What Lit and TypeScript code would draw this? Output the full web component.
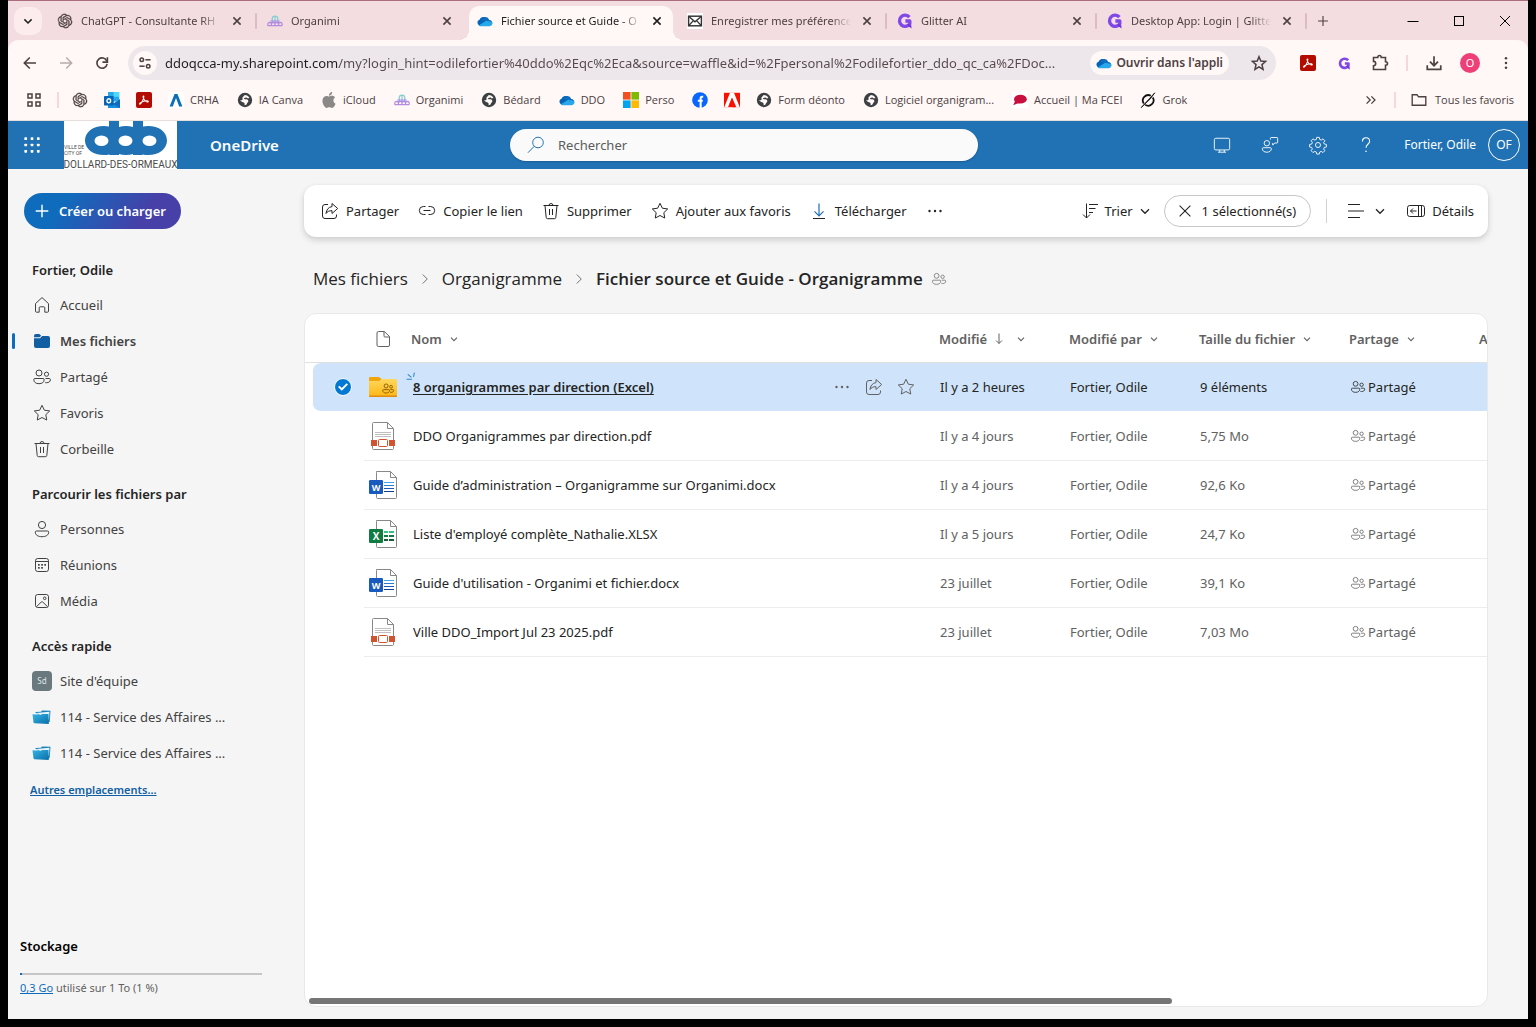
import { LitElement, html, svg, css, nothing, type TemplateResult, type SVGTemplateResult } from "lit";
import { customElement, property, state } from "lit/decorators.js";
import { classMap } from "lit/directives/class-map.js";
import { styleMap } from "lit/directives/style-map.js";

/* ------------------------------------------------------------------ icons */

const people = svg`<circle cx="7" cy="6" r="3"/><circle cx="14.5" cy="7.2" r="2.1"/>
  <path d="M3 11.5h8a1.2 1.2 0 0 1 1.2 1.2c0 2.4-2 4-5.2 4s-5.200-1.600-5.200-4A1.200 1.200 0 0 1 3 11.500z"/>
  <path d="M13.500 11.500h3.700a1.200 1.200 0 0 1 1.200 1.200c0 2-1.600 3-3.900 3-.6 0-1 0-1.500-.2"/>`;
const star = svg`<path d="M10 2.300l2.350 4.900 5.350.750-3.900 3.750.950 5.350L10 14.500l-4.750 2.550.950-5.350L2.300 7.950l5.350-.750z"/>`;
const cloud = svg`<path d="M2 13.500a3.600 3.600 0 0 1-.4-7A5.300 5.300 0 0 1 10.500 4.600l3.300 2.700z" transform="translate(1.500 2)" fill="#0364b8" stroke="none"/>
  <path d="M5.500 8.200A5.200 5.200 0 0 1 15.300 8.600 4.200 4.200 0 0 1 19 13l-3 1.500z" fill="#0f6cbd" stroke="none"/>
  <path d="M4 16.500h11.800A3.700 3.700 0 0 0 19 11.200L11.500 9.600 2 15.600A4 4 0 0 0 4 16.500z" fill="#28a8ea" stroke="none"/>`;
const openai = svg`<path transform="translate(1 1) scale(.75)" fill="currentColor" stroke="currentColor" stroke-width=".5" d="M22.2819 9.8211a5.9847 5.9847 0 0 0-.5157-4.9108 6.0462 6.0462 0 0 0-6.5098-2.9A6.0651 6.0651 0 0 0 4.9807 4.1818a5.9847 5.9847 0 0 0-3.9977 2.9 6.0462 6.0462 0 0 0 .7427 7.0966 5.98 5.98 0 0 0 .511 4.9107 6.051 6.051 0 0 0 6.5146 2.9001A5.9847 5.9847 0 0 0 13.2599 24a6.0557 6.0557 0 0 0 5.7718-4.2058 5.9894 5.9894 0 0 0 3.9977-2.9001 6.0557 6.0557 0 0 0-.7475-7.0729zm-9.022 12.6081a4.4755 4.4755 0 0 1-2.8764-1.0408l.1419-.0804 4.7783-2.7582a.7948.7948 0 0 0 .3927-.6813v-6.7369l2.02 1.1686a.071.071 0 0 1 .038.052v5.5826a4.504 4.504 0 0 1-4.4945 4.4944zm-9.6607-4.1254a4.4708 4.4708 0 0 1-.5346-3.0137l.142.0852 4.783 2.7582a.7712.7712 0 0 0 .7806 0l5.8428-3.3685v2.3324a.0804.0804 0 0 1-.0332.0615L9.74 19.9502a4.4992 4.4992 0 0 1-6.1408-1.6464zM2.3408 7.8956a4.485 4.485 0 0 1 2.3655-1.9728V11.6a.7664.7664 0 0 0 .3879.6765l5.8144 3.3543-2.0201 1.1685a.0757.0757 0 0 1-.071 0l-4.8303-2.7865A4.504 4.504 0 0 1 2.3408 7.872zm16.5963 3.8558L13.1038 8.364 15.1192 7.2a.0757.0757 0 0 1 .071 0l4.8303 2.7913a4.4944 4.4944 0 0 1-.6765 8.1042v-5.6772a.79.79 0 0 0-.407-.667zm2.0107-3.0231l-.142-.0852-4.7735-2.7818a.7759.7759 0 0 0-.7854 0L9.409 9.2297V6.8974a.0662.0662 0 0 1 .0284-.0615l4.8303-2.7866a4.4992 4.4992 0 0 1 6.6802 4.66zM8.3065 12.863l-2.02-1.1638a.0804.0804 0 0 1-.038-.0567V6.0742a4.4992 4.4992 0 0 1 7.3757-3.4537l-.142.0805L8.704 5.459a.7948.7948 0 0 0-.3927.6813zm1.0976-2.3654l2.602-1.4998 2.6069 1.4998v2.9994l-2.5974 1.4997-2.6067-1.4997Z"/>`;
const sheet = svg`<path d="M8.500 1.500h14l6 6v20a1 1 0 0 1-1 1h-18a1 1 0 0 1-1-1v-25a1 1 0 0 1 1-1z" fill="#fff" stroke="#8a8886"/>
  <path d="M22.500 1.500v6h6" fill="none" stroke="#8a8886"/>`;

const icons: Record<string, SVGTemplateResult> = {
  openai,
  organimi: svg`<g fill="none" stroke-width="1.500"><path d="M6.500 9V7.500a3.500 3.500 0 0 1 7 0V9M10 4v6" stroke="#84cfd0"/><path d="M6.500 13V8.500M10 13V9M13.500 13V8.500M4 10h12" stroke="#9a9ee6"/>
    <path d="M1 16v-2a2 2 0 0 1 4.500 0V16M5.500 16v-2.500a2 2 0 0 1 4.500 0V16M10 13.500a2 2 0 0 1 4.500 0V16M14.500 16v-2a2 2 0 0 1 4.500 0V16M1 15.800h18M3 12h14" stroke="#b58be0"/></g>`,
  cloud,
  mail: svg`<path d="M0 0h20v20H0z" fill="#fff" stroke="none"/><rect x="2" y="4" width="16" height="12" fill="#fff" stroke="#333" stroke-width="1.800"/><path d="M2 4l8 7 8-7M2 16l6-6.500M18 16l-6-6.500" stroke="#333" stroke-width="1.600"/>`,
  glitter: svg`<path d="M15.500 5.200A7 7 0 1 0 16 13.500V10H10.500" stroke="#8048e6" stroke-width="4.200" stroke-linejoin="round"/><path d="M12 13l6 2.500v4l-3-2.500z" fill="#6d32d9" stroke="none"/>`,
  close: svg`<path d="M5.500 5.500l9 9M14.500 5.500l-9 9" stroke-width="2"/>`,
  plus: svg`<path d="M10 3v14M3 10h14" stroke-width="1.600"/>`,
  minimize: svg`<path d="M4.500 10.500h11"/>`,
  maximize: svg`<rect x="5.500" y="5.500" width="9" height="9"/>`,
  windowClose: svg`<path d="M5 5l10 10M15 5L5 15"/>`,
  chevronBold: svg`<path d="M5.500 8l4.500 4.500L14.500 8" stroke-width="1.900"/>`,
  chevron: svg`<path d="M5 7.800l5 5 5-5" stroke-width="1.600"/>`,
  chevronSmall: svg`<path d="M7 8.700l3 3 3-3" stroke-width="1.100"/>`,
  chevronRight: svg`<path d="M7.500 5l5 5-5 5" stroke-width="1.100"/>`,
  back: svg`<path d="M16 10H4.500M9.800 4.500L4.300 10l5.500 5.500" stroke-width="1.600"/>`,
  forward: svg`<path d="M4 10h11.500M10.200 4.500l5.500 5.500-5.500 5.500" stroke-width="1.500"/>`,
  reload: svg`<path d="M15.400 8A5.700 5.700 0 1 0 15.700 11" stroke-width="1.800"/><path d="M16 3.500V9h-5.500" stroke-width="1.800"/>`,
  tune: svg`<g stroke-width="1.900"><circle cx="6" cy="6" r="2.200"/><path d="M10.500 6H17"/><circle cx="14" cy="14" r="2.200"/><path d="M3 14h6.500"/></g>`,
  starBold: svg`<path d="M10 3l2 4.900 5.300.4-4 3.500 1.200 5.200L10 14.200 5.500 17l1.200-5.200-4-3.500L8 7.900z" stroke-width="1.700"/>`,
  pdf: svg`<rect width="20" height="20" rx="2.500" fill="#b30b00" stroke="none"/><path d="M4.800 15.200c1.600-.4 4.700-5.700 5-9.200.1-1.600-1.200-1.400-1 0 .4 3 3.200 6.200 5.400 6.600 1.600.2 1.500-1.300 0-1.500-2.300-.3-5.600.5-8.400 2.200-1.400.9-1.800 2-1 1.900z" stroke="#fff" stroke-width="1.300"/>`,
  puzzle: svg`<path d="M3.500 4.500h4.300c0-1 .5-2 1.700-2s1.700 1 1.700 2h4.300v4.300c1 0 2 .5 2 1.700s-1 1.700-2 1.700v4.300h-12v-3.700c1.200 0 2.200-.7 2.200-2.200s-1-2.200-2.200-2.200z" stroke-width="1.600"/>`,
  download: svg`<path d="M10 2.500v10M5.500 8.500L10 13l4.500-4.500M2.500 12.500v4.500h15v-4.500" stroke-width="1.900"/>`,
  menu: svg`<g fill="currentColor" stroke="none"><circle cx="10" cy="4" r="1.600"/><circle cx="10" cy="10" r="1.600"/><circle cx="10" cy="16" r="1.600"/></g>`,
  apps: svg`<g stroke-width="1.900"><rect x="2.500" y="2.500" width="5" height="5"/><rect x="12.500" y="2.500" width="5" height="5"/><rect x="2.500" y="12.500" width="5" height="5"/><rect x="12.500" y="12.500" width="5" height="5"/></g>`,
  outlook: svg`<rect x="5" y="0" width="14" height="12" fill="#28a8ea" stroke="none"/><rect x="12" y="0" width="7" height="6" fill="#50d9ff" stroke="none"/><path d="M5 9l8 5 7-5v11H5z" fill="#1490df" stroke="none"/><path d="M20 9v11l-9-5z" fill="#0f6cbd" stroke="none"/><rect x="0" y="5" width="12" height="12" rx="1" fill="#0364b8" stroke="none"/><ellipse cx="6" cy="11" rx="2.300" ry="2.500" stroke="#fff" stroke-width="1.700"/>`,
  crha: svg`<path d="M0 0h20v20H0z" fill="#fff" stroke="none"/><path d="M2 18L8.200 2.500h3.600L18 18h-4L10 7.500 6 18z" fill="#0a6fb8" stroke="none"/>`,
  globe: svg`<circle cx="10" cy="10" r="9" fill="#3c4043" stroke="none"/><path d="M9.500 3.700c2.700 0 5 1.300 6 3.800-1.500.9-2.800.3-3.400-.7-1.200-.2-2.300.7-3.400.9.200 1.400 1.600 1.400 2.900 1.500 1.800.2 2.800 1.300 2.500 2.800-.3 1.300-1.400 1.500-1.700 2.500-.4 1.200-1.300 2.300-3 2.200.4-1.500.2-2.600-.9-3.500-1.300-1-3.700-1.200-4.700-3 1.400.2 2.400.3 3-.6.500-1-.4-1.800.2-3 .6-1.200 2-1.500 2.500-2.900z" fill="#fff8f6" stroke="none"/>`,
  apple: svg`<path transform="scale(.8333)" fill="#8b8888" stroke="none" d="M12.152 6.896c-.948 0-2.415-1.078-3.960-1.040-2.040.027-3.910 1.183-4.961 3.014-2.117 3.675-.546 9.103 1.519 12.090 1.013 1.454 2.208 3.090 3.792 3.039 1.520-.065 2.090-.987 3.935-.987 1.831 0 2.350.987 3.960.948 1.637-.026 2.676-1.480 3.676-2.948 1.156-1.688 1.636-3.325 1.662-3.415-.039-.013-3.182-1.221-3.220-4.857-.026-3.040 2.480-4.494 2.597-4.559-1.429-2.090-3.623-2.324-4.390-2.376-2-.156-3.675 1.090-4.610 1.090zM15.530 3.830c.843-1.012 1.400-2.427 1.245-3.830-1.207.052-2.662.805-3.532 1.818-.780.896-1.454 2.338-1.273 3.714 1.338.104 2.715-.688 3.559-1.701"/>`,
  microsoft: svg`<g stroke="none"><path d="M0 0h9.500v9.500H0z" fill="#f25022"/><path d="M10.500 0H20v9.500h-9.500z" fill="#7fba00"/><path d="M0 10.500h9.500V20H0z" fill="#00a4ef"/><path d="M10.500 10.500H20V20h-9.500z" fill="#ffb900"/></g>`,
  facebook: svg`<circle cx="10" cy="10" r="9.800" fill="#0866ff" stroke="none"/><path d="M14 6H12.500C11.300 6 10.800 6.700 10.800 7.900V20M7.300 11h6.200" stroke="#fff" stroke-width="2.600"/>`,
  adobe: svg`<path d="M0 1h20v18H0z" fill="#fa0f00" stroke="none"/><path d="M7.500 1L.300 19H5L10 6.800 15.500 19h4.200L12.500 1z" fill="#fff" stroke="none"/><path d="M10 7.800l3.800 11.200h-3l-1.200-3.800H6.700z" fill="#fa0f00" stroke="none"/>`,
  bubble: svg`<path d="M0 0h20v20H0z" fill="#fff" stroke="none"/><ellipse cx="10.500" cy="9" rx="8" ry="5.500" fill="#c8103e" stroke="none"/><path d="M4 11l-2.500 5.500L9 13.500z" fill="#c8103e" stroke="none"/>`,
  grok: svg`<path d="M13.500 4.700A6.800 6.800 0 0 0 4.700 14.500M6.500 16A6.800 6.800 0 0 0 16 6.800" stroke="#111" stroke-width="2.200"/><path d="M18.500 1L1.500 19.500 13 8.500z" fill="#111" stroke="#111"/>`,
  more: svg`<path d="M4.500 5.500L9 10l-4.500 4.500M10.500 5.500L15 10l-4.500 4.500" stroke-width="1.600"/>`,
  folderLine: svg`<path d="M1.500 3.500h6l2 2.500h9v10.500h-17z" stroke-width="1.700"/>`,
  waffle: svg`<g fill="currentColor" stroke="none">${[3, 10, 17].map((y) => [3, 10, 17].map((x) => svg`<rect x=${x - 1.5} y=${y - 1.5} width="3" height="3" rx=".7"/>`))}</g>`,
  search: svg`<circle cx="12" cy="7.500" r="5.300"/><path d="M8.200 11.300L2 17.700"/>`,
  screen: svg`<rect x="1.500" y="2.500" width="17" height="13" rx="1.700"/><path d="M7.500 15.500v2.500M12.500 15.500v2.500M5.500 18h9"/>`,
  feedback: svg`<circle cx="6.500" cy="8" r="3"/><path d="M2.500 13h8a1 1 0 0 1 1 1c0 2.500-2 4-5 4s-5-1.500-5-4a1 1 0 0 1 1-1z"/><path d="M10.500 4V2.500a.8.800 0 0 1 .8-.8h6.400a.8.800 0 0 1 .8.800V7a.8.800 0 0 1-.8.800h-2.200L13 10V7.800"/>`,
  gear: svg`<circle cx="10" cy="10" r="2.800"/><path d="M8.600 1.500h2.800l.5 2.300 1.700.7 2-1.300 2 2-1.300 2 .7 1.700 2.300.5v2.800l-2.300.5-.7 1.700 1.300 2-2 2-2-1.300-1.700.7-.5 2.300H8.600l-.5-2.300-1.700-.7-2 1.300-2-2 1.300-2-.7-1.700-2.300-.5V9.400l2.300-.5.700-1.700-1.300-2 2-2 2 1.300 1.700-.7z"/>`,
  help: svg`<path d="M6 6.200C6 3.600 7.600 2 10 2s4 1.500 4 3.800c0 3.200-4 3.600-4 7.200" stroke-width="1.200"/><circle cx="10" cy="17" r=".9" fill="currentColor" stroke="none"/>`,
  home: svg`<path d="M3.500 8.600L10 2.600l6.500 6v7.600a1 1 0 0 1-1 1h-2.700v-4.400a1 1 0 0 0-1-1H8.200a1 1 0 0 0-1 1v4.400H4.500a1 1 0 0 1-1-1z"/>`,
  folder: svg`<g fill="#115ea3" stroke="none"><path d="M2 5a2 2 0 0 1 2-2h3.300l1.900 1.700-1.600 1.600H2z"/><path d="M2 7.200h6l2.200-2.200H16a2 2 0 0 1 2 2v8a2 2 0 0 1-2 2H4a2 2 0 0 1-2-2z"/></g>`,
  people,
  star,
  trash: svg`<path d="M2.500 4.500h15M8 4.500a2 2 0 0 1 4 0M4 4.500l1.200 12a1.300 1.300 0 0 0 1.300 1.200h7a1.300 1.300 0 0 0 1.300-1.200L16 4.500M8.500 8v6M11.500 8v6"/>`,
  person: svg`<circle cx="10" cy="6" r="3.600"/><path d="M4.500 12h11a1.200 1.200 0 0 1 1.200 1.200c0 2.800-2.700 4.500-6.700 4.500s-6.700-1.700-6.700-4.500A1.200 1.200 0 0 1 4.500 12z"/>`,
  calendar: svg`<rect x="3.500" y="3.500" width="13" height="13" rx="2.200"/><path d="M3.500 6.500h13"/><g fill="currentColor" stroke="none"><rect x="6" y="9" width="1.700" height="1.700"/><rect x="9.200" y="9" width="1.700" height="1.700"/><rect x="12.300" y="9" width="1.700" height="1.700"/><rect x="6" y="12" width="1.700" height="1.700"/><rect x="9.200" y="12" width="1.700" height="1.700"/></g>`,
  image: svg`<rect x="3.500" y="3.500" width="13" height="13" rx="2.200"/><circle cx="12.700" cy="7.300" r="1.300"/><path d="M4.500 15.700l4.700-4.600a1.100 1.100 0 0 1 1.600 0l4.700 4.600"/>`,
  library: svg`<defs><linearGradient id="lib" x1="0" y1="0" x2="1" y2="1"><stop offset="0" stop-color="#35b4e6"/><stop offset="1" stop-color="#0a6ea8"/></linearGradient></defs><g stroke="none"><path d="M3 5l6-.3 1-1.200 8.500.3-.8 11-2.200 1.200z" fill="#1a83ba"/><path d="M4 6l13.500-1.200-.6 8z" fill="#e9f5fb"/><path d="M.500 7.300l8.500.5 1-.8h6.500l.3 10-14-.8a1.200 1.200 0 0 1-1.300-1z" fill="url(#lib)"/></g>`,
  share: svg`<path d="M8 3.500H5A2.500 2.500 0 0 0 2.500 6v9A2.500 2.500 0 0 0 5 17.500h9a2.500 2.500 0 0 0 2.500-2.500v-1.500"/><path d="M12 2.500l5.700 5-5.700 5V9.700c-3 0-4.700.8-6 2.800.3-3.600 2.500-6.500 6-6.900z"/>`,
  link: svg`<path d="M8.500 5.500H6.300a4 4 0 0 0 0 8h2.200M11.500 5.500h2.200a4 4 0 0 1 0 8h-2.200M6.500 9.500h7"/>`,
  arrowDownLine: svg`<path d="M10 2.500v12M5.500 10.300l4.500 4.500 4.500-4.500" stroke="#1e6fb8" stroke-width="1.200"/><path d="M4 17.500h12"/>`,
  dots: svg`<g fill="currentColor" stroke="none"><circle cx="4.500" cy="10" r="1.200"/><circle cx="10" cy="10" r="1.200"/><circle cx="15.500" cy="10" r="1.200"/></g>`,
  sort: svg`<path d="M5.500 2.500v14.500M2 13.500L5.500 17l3.500-3.500M8 3.500h9M8 7.500h6.500M8 11.500h4"/>`,
  clear: svg`<path d="M4 4l12 12M16 4L4 16" stroke-width="1.200"/>`,
  list: svg`<path d="M2 3.500h12M2 10h16M2 16.500h12" stroke-width="1.200"/>`,
  details: svg`<rect x="1.500" y="4.500" width="17" height="11" rx="2.200"/><path d="M12.500 4.500v11M10.500 10H4.500M7 7.500L4.500 10 7 12.500M15.500 4.500v11"/>`,
  document: svg`<path d="M5.500 2.500h5.800l5.200 5v8.500a1.500 1.500 0 0 1-1.500 1.500H5.500A1.500 1.500 0 0 1 4 16V4a1.500 1.500 0 0 1 1.500-1.500zM11 2.500V7a1 1 0 0 0 1 1h4.500"/>`,
  arrowDown: svg`<path d="M10 4.500v10M7 11.500l3 3 3-3"/>`,
  glimmer: svg`<path d="M1 12h9M3 4l6 5M14 1l-1.500 7" stroke="#2b88d8" stroke-width="1.800"/>`,
};

const fileIcons: Record<string, SVGTemplateResult> = {
  folder: svg`<defs><linearGradient id="fold" x1="0" y1="0" x2="0" y2="1"><stop offset="0" stop-color="#ffd75e"/><stop offset="1" stop-color="#fdb713"/></linearGradient></defs>
    <path d="M1 6a1 1 0 0 1 1-1h8.500a2 2 0 0 1 1.400.6L13.500 7 12 9H1z" fill="#f2a60c"/><path d="M1 9h10.500l2-2H28a1 1 0 0 1 1 1v16a1 1 0 0 1-1 1H2a1 1 0 0 1-1-1z" fill="url(#fold)"/><path d="M1 23.500h28v.5a1 1 0 0 1-1 1H2a1 1 0 0 1-1-1z" fill="#e08c10"/>
    <g transform="translate(13.500 10) scale(.66)" fill="none" stroke="#8a5a00" stroke-width="1.400">${people}</g>`,
  pdf: svg`<path d="M5.500 1.500h14l6 6v20a1 1 0 0 1-1 1h-19a1 1 0 0 1-1-1v-25a1 1 0 0 1 1-1z" fill="#fff" stroke="#8a8886"/><path d="M19.500 1.500v6h6" fill="none" stroke="#8a8886"/><path d="M7 11.500h16M7 13.500h16M7 15.500h16" stroke="#c0bfbe"/><path d="M3 19h24v6H3z" fill="#d35230"/><rect x="9" y="17" width="12" height="9" rx="1.500" fill="#fff"/><rect x="10.500" y="18.500" width="9" height="7" rx="1" fill="#fff" stroke="#d35230"/>`,
  word: svg`${sheet}<path d="M16 12.500h10" stroke="#41a5ee"/><path d="M16 15.500h10" stroke="#2b7cd3"/><path d="M16 18.500h10" stroke="#185abd"/><path d="M16 21.500h10" stroke="#103f91"/><rect x="1" y="10" width="14" height="14" rx="1.200" fill="#185abd"/><text x="8" y="20.500" text-anchor="middle" font-size="9" font-weight="700" fill="#fff">W</text>`,
  excel: svg`${sheet}<g stroke-width="2"><path d="M16 13h4M21 13h5" stroke="#33c481"/><path d="M16 17h4M21 17h5" stroke="#107c41"/><path d="M16 21h4M21 21h5" stroke="#185c37"/></g><rect x="1" y="10" width="14" height="14" rx="1.200" fill="#107c41"/><text x="8" y="20.500" text-anchor="middle" font-size="10" font-weight="700" fill="#fff">X</text>`,
};

@customElement("ui-icon")
class UiIcon extends LitElement {
  static styles = css`
    :host { display: inline-flex; flex: none; }
    svg { display: block; fill: none; stroke: currentColor; stroke-width: 1; overflow: visible; }
  `;
  @property() name = "";
  @property({ type: Number }) size = 20;
  render() {
    return html`<svg width=${this.size} height=${this.size} viewBox="0 0 20 20" aria-hidden="true">${icons[this.name]}</svg>`;
  }
}

@customElement("file-icon")
class FileIcon extends LitElement {
  static styles = css`
    :host { display: inline-flex; flex: none; }
    svg { display: block; font-family: "Open Sans", sans-serif; }
  `;
  @property() kind = "";
  render() {
    return html`<svg width="30" height="30" viewBox="0 0 30 30" aria-hidden="true">${fileIcons[this.kind]}</svg>`;
  }
}

const icon = (name: string, size = 20): TemplateResult => html`<ui-icon .name=${name} .size=${size}></ui-icon>`;

const base = css`
  * { box-sizing: border-box; }
  button, input { font: inherit; color: inherit; margin: 0; padding: 0; border: 0; background: none; }
  button { cursor: pointer; display: inline-flex; align-items: center; justify-content: center; white-space: nowrap; }
  a { color: inherit; text-decoration: none; }
  ul, ol { list-style: none; margin: 0; padding: 0; }
  h2 { margin: 0; font-size: 13px; font-weight: 600; }
`;

/* --------------------------------------------------------- browser window */

const tabs = [
  { icon: "openai", title: "ChatGPT - Consultante RH" },
  { icon: "organimi", title: "Organimi" },
  { icon: "cloud", title: "Fichier source et Guide - O" },
  { icon: "mail", title: "Enregistrer mes préférence" },
  { icon: "glitter", title: "Glitter AI" },
  { icon: "glitter", title: "Desktop App: Login | Glitte" },
];

const bookmarks = [
  { icon: "openai", label: "" },
  { icon: "outlook", label: "" },
  { icon: "pdf", label: "" },
  { icon: "crha", label: "CRHA" },
  { icon: "globe", label: "IA Canva" },
  { icon: "apple", label: "iCloud" },
  { icon: "organimi", label: "Organimi" },
  { icon: "globe", label: "Bédard" },
  { icon: "cloud", label: "DDO" },
  { icon: "microsoft", label: "Perso" },
  { icon: "facebook", label: "" },
  { icon: "adobe", label: "" },
  { icon: "globe", label: "Form déonto" },
  { icon: "globe", label: "Logiciel organigram..." },
  { icon: "bubble", label: "Accueil | Ma FCEI" },
  { icon: "grok", label: "Grok" },
];

@customElement("browser-bar")
class BrowserBar extends LitElement {
  static styles = [base, css`
    :host { display: block; background: #f3dde0; border-top: 1px solid #a96d7d; color: #4d4043; font-size: 11px; }
    .strip { display: flex; align-items: center; height: 39px; padding-left: 6px; }
    .find { width: 28px; height: 28px; border-radius: 10px; background: #fdecee; color: #1f1f1f; }
    .tabs { display: flex; flex: 0 1 1260px; min-width: 0; height: 39px; margin-left: 5px; }
    .tab { display: flex; align-items: center; gap: 8px; flex: 1 1 0; min-width: 0; padding: 0 12px 0 10px; position: relative; }
    .tab.line::after { content: ""; width: 2px; height: 16px; border-radius: 1px; background: #ddbbc2; position: absolute; right: 0; }
    .tab.active { margin: 5px 4px 0 2px; padding: 0 8px 5px; border-radius: 10px 10px 0 0; background: #fff8f6; color: #1f1f1f; }
    .tab.active::before, .tab.active::after { content: ""; position: absolute; bottom: 0; width: 10px; height: 10px; }
    .tab.active::before { left: -10px; background: radial-gradient(circle at 0 0, transparent 10px, #fff8f6 10px); }
    .tab.active::after { right: -10px; background: radial-gradient(circle at 100% 0, transparent 10px, #fff8f6 10px); }
    .title { flex: 1; min-width: 0; overflow: hidden; white-space: nowrap; mask-image: linear-gradient(90deg, #000 calc(100% - 20px), transparent 100%); }
    .new { width: 28px; height: 28px; margin-left: 2px; }
    .window { display: flex; margin-left: auto; color: #000; }
    .window button { width: 46px; height: 38px; }
    .bar { display: flex; align-items: center; height: 46px; padding: 0 4px; background: #fff8f6; border-radius: 10px 10px 0 0; }
    .nav { width: 36px; height: 36px; }
    .nav.off { color: #b7abac; }
    .omni { display: flex; align-items: center; flex: 1; min-width: 0; height: 34px; margin: 0 14px 0 8px; padding: 0 0 0 5px; border-radius: 17px; background: #ede7eb; }
    .site { width: 24px; height: 24px; border-radius: 12px; background: #fff8f6; }
    .url { flex: 1; min-width: 0; height: 24px; margin: 0 8px; font-size: 13px; outline: none; text-overflow: ellipsis;
      background: linear-gradient(90deg, #1f1f1f 174px, #55494c 174px); background-clip: text; -webkit-text-fill-color: transparent; }
    .open { gap: 4px; height: 24px; padding: 0 6px; border-radius: 12px; background: #fff8f6; font-size: 12px; font-weight: 600; }
    .fav { width: 34px; height: 30px; margin-left: 13px; }
    .rule { width: 2px; height: 16px; background: #f6d7dc; }
    .bar .rule { margin: 0 8px; }
    .me { width: 20px; height: 20px; border-radius: 50%; background: #ee3f78; color: #fff; }
    .marks { display: flex; align-items: center; height: 35px; padding: 0 14px 7px 18px; background: #fff8f6; border-bottom: 1px solid #e6dedd; font-family: "Open Sans", sans-serif; }
    .marks ul { display: flex; flex: 1; min-width: 0; gap: 16px; margin-left: 13px; overflow: hidden; }
    .mark { display: flex; align-items: center; gap: 6px; height: 20px; white-space: nowrap; }
    .mark span { padding-right: 2px; }
    .marks .rule { margin-left: 15px; }
    .all { gap: 8px; margin-left: 15px; }
  `];

  render() {
    return html`
      <div class="strip">
        <button class="find" aria-label="Rechercher dans les onglets">${icon("chevronBold", 16)}</button>
        <div class="tabs">
          ${tabs.map((t, i) => html`
            <div class=${classMap({ tab: true, active: i === 2, line: i !== 1 && i !== 2 })}>
              ${icon(t.icon, 16)}
              <span class="title">${t.title}</span>
              <button aria-label="Fermer">${icon("close", 16)}</button>
            </div>`)}
        </div>
        <button class="new" aria-label="Nouvel onglet">${icon("plus", 14)}</button>
        <div class="window">
          <button aria-label="Réduire">${icon("minimize")}</button>
          <button aria-label="Agrandir">${icon("maximize")}</button>
          <button aria-label="Fermer la fenêtre">${icon("windowClose")}</button>
        </div>
      </div>
      <div class="bar">
        <button class="nav" aria-label="Précédent">${icon("back")}</button>
        <button class="nav off" aria-label="Suivant">${icon("forward")}</button>
        <button class="nav" aria-label="Actualiser">${icon("reload", 18)}</button>
        <div class="omni">
          <button class="site" aria-label="Informations du site">${icon("tune", 16)}</button>
          <input class="url" aria-label="Adresse" spellcheck="false"
            .value=${"ddoqcca-my.sharepoint.com/my?login_hint=odilefortier%40ddo%2Eqc%2Eca&source=waffle&id=%2Fpersonal%2Fodilefortier_ddo_qc_ca%2FDoc..."} />
          <button class="open">${icon("cloud", 16)}Ouvrir dans l'appli</button>
          <button class="fav" aria-label="Ajouter aux favoris">${icon("starBold", 18)}</button>
        </div>
        <button class="nav" aria-label="Acrobat">${icon("pdf", 16)}</button>
        <button class="nav" aria-label="Glitter">${icon("glitter", 13)}</button>
        <button class="nav" aria-label="Extensions">${icon("puzzle")}</button>
        <span class="rule"></span>
        <button class="nav" aria-label="Téléchargements">${icon("download", 18)}</button>
        <button class="nav" aria-label="Profil"><span class="me">O</span></button>
        <button class="nav" aria-label="Menu">${icon("menu", 16)}</button>
      </div>
      <div class="marks">
        <button aria-label="Groupes">${icon("apps", 16)}</button>
        <span class="rule"></span>
        <ul>
          ${bookmarks.map((b) => html`<li><a class="mark" href="#">${icon(b.icon, 16)}${b.label ? html`<span>${b.label}</span>` : nothing}</a></li>`)}
        </ul>
        <button aria-label="Autres favoris">${icon("more", 16)}</button>
        <span class="rule"></span>
        <button class="all">${icon("folderLine", 16)}Tous les favoris</button>
      </div>`;
  }
}

/* ------------------------------------------------------------ suite header */

@customElement("suite-header")
class SuiteHeader extends LitElement {
  static styles = [base, css`
    :host { display: grid; grid-template-columns: 502fr 468px 542fr; align-items: center; height: 48px; padding-right: 8px; background: #2072b5; color: #fff; font-size: 13px; }
    .left { display: flex; align-items: center; height: 48px; }
    .waffle { width: 48px; height: 48px; }
    .logo { display: block; margin-left: 8px; background: #fff; font-family: Roboto, sans-serif; }
    .product { margin-left: 33px; font-size: 15px; font-weight: 600; }
    .search { display: flex; align-items: center; gap: 12px; height: 32px; padding: 0 16px; border-radius: 16px; background: #fafafa; color: #2072b5; box-shadow: 0 1px 2px rgba(0, 0, 0, 0.2); }
    .search input { flex: 1; min-width: 0; outline: none; color: #242424; }
    .search input::placeholder { color: #5c5c5c; opacity: 1; }
    .right { display: flex; align-items: center; justify-content: flex-end; }
    .tool { width: 48px; height: 48px; }
    .user { gap: 12px; margin-left: 14px; font-size: 12px; }
    .disc { display: flex; align-items: center; justify-content: center; width: 32px; height: 32px; border: 1px solid #fff; border-radius: 50%; }
  `];

  render() {
    return html`
      <div class="left">
        <button class="waffle" aria-label="Lanceur d'applications">${icon("waffle", 18)}</button>
        <svg class="logo" width="113" height="48" viewBox="0 0 113 48" role="img" aria-label="Ville de Dollard-des-Ormeaux">
          <path fill="#2072b5" fill-rule="evenodd" d="M45 0h10v6q3-1 7-1t7 1V0h10v5.500q2-.5 5-.5c11 0 19 6 19 14.500S95 34 84 34q-3 0-5-.5l-1 .500h-9v-1q-3 1-7 1t-7-1v1h-9l-1-.500q-2 .500-5 .500c-11 0-19-6-19-14.500S29 5 40 5q3 0 5 .500z
            M37.500 14.500a7 5.300 0 1 0 0 10.600a7 5.300 0 1 0 0-10.600z M61.500 14.500a7 5.300 0 1 0 0 10.600a7 5.300 0 1 0 0-10.600z M85.500 14.500a7 5.300 0 1 0 0 10.600a7 5.300 0 1 0 0-10.600z"/>
          <g fill="#4a4a4a"><text x="0" y="28" font-size="5">VILLE DE</text><text x="0" y="34" font-size="5">CITY OF</text>
          <text x="56.500" y="47" text-anchor="middle" font-size="10">DOLLARD-DES-ORMEAUX</text></g>
        </svg>
        <span class="product">OneDrive</span>
      </div>
      <label class="search">${icon("search", 20)}<input type="search" aria-label="Rechercher" placeholder="Rechercher" /></label>
      <div class="right">
        <button class="tool" aria-label="Ouvrir l'application">${icon("screen", 18)}</button>
        <button class="tool" aria-label="Commentaires">${icon("feedback", 18)}</button>
        <button class="tool" aria-label="Paramètres">${icon("gear", 18)}</button>
        <button class="tool" aria-label="Aide">${icon("help", 18)}</button>
        <button class="user">Fortier, Odile<span class="disc">OF</span></button>
      </div>`;
  }
}

/* ----------------------------------------------------------------- sidebar */

const sections = [
  { title: "Fortier, Odile", items: [["home", "Accueil"], ["folder", "Mes fichiers"], ["people", "Partagé"], ["star", "Favoris"], ["trash", "Corbeille"]] },
  { title: "Parcourir les fichiers par", items: [["person", "Personnes"], ["calendar", "Réunions"], ["image", "Média"]] },
  { title: "Accès rapide", items: [["site", "Site d'équipe"], ["library", "114 - Service des Affaires ..."], ["library", "114 - Service des Affaires ..."]] },
];

@customElement("side-nav")
class SideNav extends LitElement {
  static styles = [base, css`
    :host { display: flex; flex-direction: column; align-items: stretch; padding: 24px 42px 23px 0; color: #424242; font-size: 13px; }
    .create { align-self: flex-start; gap: 8px; height: 36px; margin: 0 0 24px 16px; padding: 0 15px 0 9px; border-radius: 18px; color: #fff; font-weight: 600;
      background: linear-gradient(125deg, #0f6cbd 25%, #4640a8 75%); }
    section { margin-bottom: 10px; }
    h2 { height: 34px; line-height: 34px; padding-left: 24px; color: #242424; }
    .item { display: flex; align-items: center; gap: 8px; height: 36px; white-space: nowrap; }
    .item::before { content: ""; width: 3px; height: 16px; margin: 0 9px 0 4px; border-radius: 2px; }
    .item.on { font-weight: 600; }
    .item.on::before { background: #0f6cbd; }
    .site { display: flex; align-items: center; justify-content: center; width: 20px; height: 20px; border-radius: 4px; background: #69797e; color: #dfe4e5; font-size: 8px; }
    .others { display: block; margin-left: 22px; line-height: 18px; color: #115ea3; font-size: 11px; font-weight: 600; text-decoration: underline; }
    .storage { display: flex; flex-direction: column; margin: auto 0 0 12px; }
    .storage h2 { height: 20px; line-height: 20px; padding: 0; color: #000; }
    .meter { height: 2px; margin: 17px 0 5px; background: #c8c6c4; }
    .used { height: 2px; background: #0f6cbd; }
    .quota { font-size: 11px; line-height: 16px; color: #616161; }
    .quota a { color: #0f6cbd; text-decoration: underline; }
  `];

  render() {
    return html`
      <button class="create">${icon("plus", 18)}Créer ou charger</button>
      ${sections.map((s) => html`
        <section>
          <h2>${s.title}</h2>
          <ul>
            ${s.items.map(([ic, label]) => html`<li><a href="#" class=${classMap({ item: true, on: ic === "folder" })}>
              ${ic === "site" ? html`<span class="site">Sd</span>` : icon(ic)}<span>${label}</span></a></li>`)}
          </ul>
        </section>`)}
      <a class="others" href="#">Autres emplacements...</a>
      <div class="storage">
        <h2>Stockage</h2>
        <div class="meter"><div class="used" style=${styleMap({ width: "1%" })}></div></div>
        <div class="quota"><a href="#">0,3 Go</a> utilisé sur 1 To (1 %)</div>
      </div>`;
  }
}

/* --------------------------------------------------------------- file view */

interface FileRow { kind: string; name: string; modified: string; size: string; }

const files: FileRow[] = [
  { kind: "folder", name: "8 organigrammes par direction (Excel)", modified: "Il y a 2 heures", size: "9 éléments" },
  { kind: "pdf", name: "DDO Organigrammes par direction.pdf", modified: "Il y a 4 jours", size: "5,75 Mo" },
  { kind: "word", name: "Guide d’administration – Organigramme sur Organimi.docx", modified: "Il y a 4 jours", size: "92,6 Ko" },
  { kind: "excel", name: "Liste d'employé complète_Nathalie.XLSX", modified: "Il y a 5 jours", size: "24,7 Ko" },
  { kind: "word", name: "Guide d'utilisation - Organimi et fichier.docx", modified: "23 juillet", size: "39,1 Ko" },
  { kind: "pdf", name: "Ville DDO_Import Jul 23 2025.pdf", modified: "23 juillet", size: "7,03 Mo" },
];

const commands = [["share", "Partager"], ["link", "Copier le lien"], ["trash", "Supprimer"], ["star", "Ajouter aux favoris"], ["arrowDownLine", "Télécharger"]];

@customElement("file-view")
class FileView extends LitElement {
  static styles = [base, css`
    :host { display: flex; flex-direction: column; min-width: 0; padding: 16px 40px 12px 0; color: #242424; font-size: 13px; }
    .commands { display: flex; align-items: center; height: 52px; padding: 0 5px 0 7px; border-radius: 12px; background: #fff; box-shadow: 0 3px 6px rgba(0, 0, 0, 0.16), 0 0 2px rgba(0, 0, 0, 0.06); }
    .cmd { gap: 6px; height: 32px; padding: 0 9px; }
    .tight { gap: 4px; margin-left: auto; }
    .pill { gap: 8px; height: 32px; margin: 0 15px 0 2px; padding: 0 14px 0 11px; border: 1px solid #c7c7c7; border-radius: 16px; }
    .rule { width: 1px; height: 24px; margin-right: 10px; background: #d1d1d1; }
    .crumbs { display: flex; align-items: center; gap: 8px; height: 76px; padding: 8px 0 0 9px; font-family: "Open Sans", sans-serif; font-size: 17px; white-space: nowrap; }
    .crumbs ol { display: flex; align-items: center; gap: 8px; }
    .crumbs li { display: flex; align-items: center; gap: 8px; }
    .here { font-weight: 600; }
    .muted { display: flex; color: #707070; }
    .card { display: flex; flex-direction: column; flex: 1; border: 1px solid #e8e8e8; border-radius: 12px; background: #fff; overflow: hidden; }
    table { width: calc(100% + 113px); table-layout: fixed; border-collapse: separate; border-spacing: 0; }
    th, td { height: 49px; padding: 0 0 0 10px; text-align: left; white-space: nowrap; border-bottom: 1px solid #ededed; }
    th { border-color: #e0e0e0; color: #616161; font-weight: 600; padding-top: 2px; padding-left: 9px; }
    td { color: #616161; background-clip: padding-box; }
    td:first-child { border-bottom-color: transparent; border-left: 8px solid transparent; }
    .c-check { width: 59px; } .c-type { width: 38px; } .c-date { width: 130px; } .c-size { width: 150px; }
    td.type { padding-left: 4px; }
    .head { display: flex; align-items: center; gap: 2px; }
    .row { display: flex; align-items: center; }
    .name { color: #242424; margin-left: 1px; }
    .acts { display: flex; margin-left: auto; padding-right: 8px; color: #616161; }
    .acts button { width: 32px; height: 32px; }
    .shared { display: flex; align-items: center; gap: 2px; }
    .on td { background-color: #cfe4fa; border-bottom-color: transparent; color: #242424; }
    .on td:first-child { border-radius: 16px 0 0 16px / 8px 0 0 8px; }
    .on .name { font-weight: 600; text-decoration: underline; text-underline-offset: 2px; }
    .glimmer { position: absolute; margin: -16px 0 0 -6px; }
    .check { display: block; width: 18px; height: 18px; margin-left: 11px; appearance: none; border-radius: 50%; opacity: 0; cursor: pointer; }
    .check:checked { display: flex; align-items: center; justify-content: center; opacity: 1; background: #0078d4; border: 1px solid #fff; }
    .check:checked::before { content: ""; width: 10px; height: 8px; background: #fff; clip-path: polygon(0 50%, 15% 35%, 38% 62%, 86% 2%, 100% 18%, 38% 96%); }
    .scroll { height: 6px; width: 73%; margin: auto 4px 2px; border-radius: 3px; background: #757575; }
  `];

  @state() private selected = new Set<number>([0]);

  private toggle(i: number) {
    const next = new Set(this.selected);
    if (!next.delete(i)) next.add(i);
    this.selected = next;
  }

  private head(label: string, sorted = false) {
    return html`<th scope="col"><span class="head">${label}${sorted ? icon("arrowDown") : nothing}${icon("chevronSmall")}</span></th>`;
  }

  private row(f: FileRow, i: number) {
    const on = this.selected.has(i);
    return html`
      <tr class=${classMap({ on })}>
        <td><input class="check" type="checkbox" aria-label=${"Sélectionner " + f.name} .checked=${on} @change=${() => this.toggle(i)} /></td>
        <td class="type"><div class="row"><file-icon .kind=${f.kind}></file-icon></div></td>
        <td><div class="row">
          ${i === 0 ? html`<span class="glimmer">${icon("glimmer", 12)}</span>` : nothing}
          <a class="name" href="#">${f.name}</a>
          ${on ? html`<span class="acts">
            <button aria-label="Autres actions">${icon("dots")}</button>
            <button aria-label="Partager">${icon("share")}</button>
            <button aria-label="Favori">${icon("star")}</button></span>` : nothing}
        </div></td>
        <td>${f.modified}</td>
        <td>Fortier, Odile</td>
        <td>${f.size}</td>
        <td><span class="shared">${icon("people", 16)}Partagé</span></td>
        <td></td>
      </tr>`;
  }

  render() {
    return html`
      <div class="commands">
        ${commands.map(([ic, label]) => html`<button class="cmd">${icon(ic)}${label}</button>`)}
        <button class="cmd" aria-label="Autres commandes">${icon("dots")}</button>
        <button class="cmd tight">${icon("sort")}<span>Trier</span>${icon("chevron", 16)}</button>
        <button class="pill" @click=${() => (this.selected = new Set())}>${icon("clear", 18)}${this.selected.size} sélectionné(s)</button>
        <span class="rule"></span>
        <button class="cmd" aria-label="Affichage">${icon("list")}${icon("chevron", 16)}</button>
        <button class="cmd">${icon("details")}Détails</button>
      </div>
      <nav class="crumbs" aria-label="Fil d'Ariane">
        <ol>
          <li><a href="#">Mes fichiers</a><span class="muted">${icon("chevronRight", 18)}</span></li>
          <li><a href="#">Organigramme</a><span class="muted">${icon("chevronRight", 18)}</span></li>
          <li><span class="here">Fichier source et Guide - Organigramme</span></li>
        </ol>
        <span class="muted">${icon("people", 16)}</span>
      </nav>
      <div class="card">
        <table>
          <colgroup><col class="c-check" /><col class="c-type" /><col /><col class="c-date" /><col class="c-date" /><col class="c-size" /><col class="c-date" /><col class="c-date" /></colgroup>
          <thead><tr>
            <th></th>
            <th class="type" scope="col"><span class="head">${icon("document")}</span></th>
            ${this.head("Nom")}${this.head("Modifié", true)}${this.head("Modifié par")}${this.head("Taille du fichier")}${this.head("Partage")}
            <th scope="col">Activité</th>
          </tr></thead>
          <tbody>${files.map((f, i) => this.row(f, i))}</tbody>
        </table>
        <div class="scroll"></div>
      </div>`;
  }
}

/* --------------------------------------------------------------------- app */

@customElement("app-root")
class AppRoot extends LitElement {
  static styles = css`
    :host { display: flex; flex-direction: column; box-sizing: border-box; min-height: 100vh; padding: 0 8px 8px; background: #000; font-family: "Noto Sans", "Open Sans", sans-serif; line-height: 20px; }
    .main { display: grid; grid-template-columns: 296px minmax(0, 1fr); flex: 1; background: #f5f5f5; }
  `;
  render() {
    return html`
      <browser-bar></browser-bar>
      <suite-header></suite-header>
      <div class="main"><side-nav></side-nav><file-view></file-view></div>`;
  }
}
